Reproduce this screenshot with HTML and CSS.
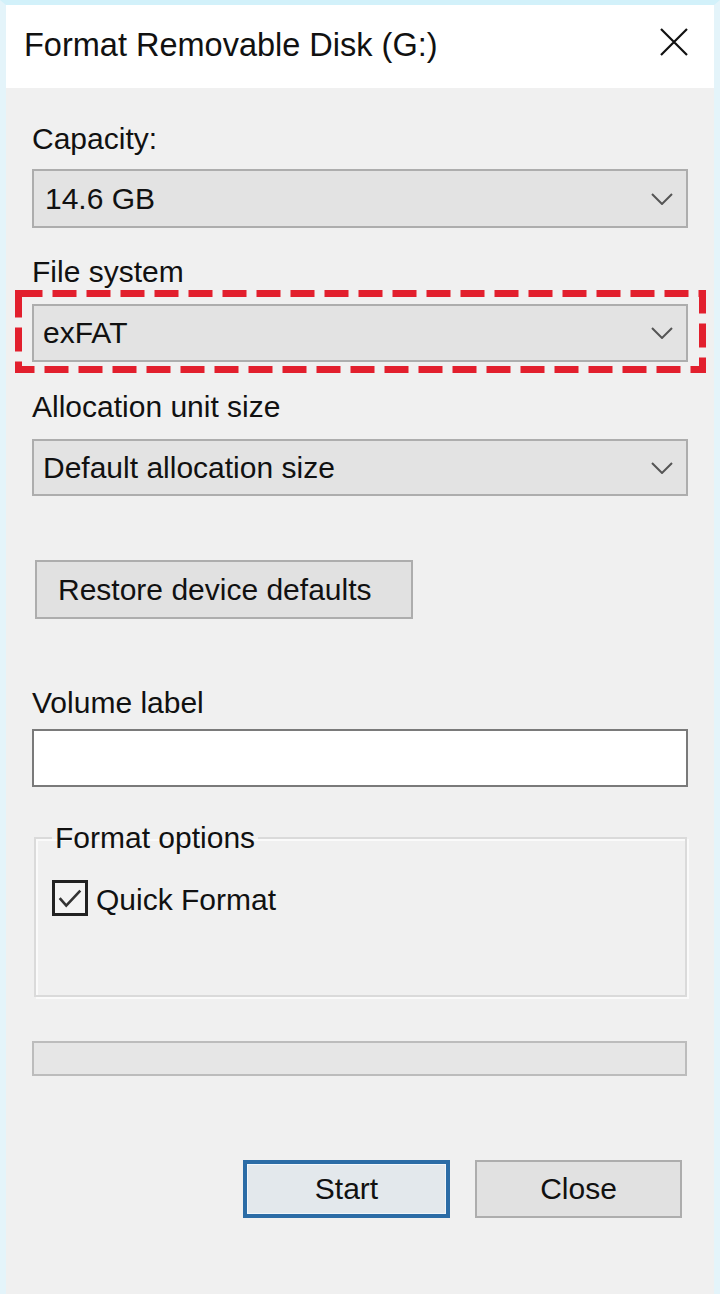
FILE: index.html
```html
<!DOCTYPE html>
<html lang="en">
<head>
<meta charset="utf-8">
<title>Format Removable Disk (G:)</title>
<link rel="stylesheet" href="styles.css">
</head>
<body>
<div class="window">
  <div class="titlebar">
    <span class="title">Format Removable Disk (G:)</span>
    <svg class="close-x" width="28" height="28" viewBox="0 0 28 28" aria-hidden="true">
      <path d="M1 1 L27 27 M27 1 L1 27" stroke="#111" stroke-width="2.2" fill="none"/>
    </svg>
  </div>
  <div class="content">
    <div class="label label-first">Capacity:</div>
    <div class="select select-1">
      <span class="select-text">14.6 GB</span>
      <svg class="chevron" width="22" height="12" viewBox="0 0 22 12" aria-hidden="true"><path d="M1 1 L11 11 L21 1" stroke="#555" stroke-width="2" fill="none"/></svg>
    </div>

    <div class="label label-gap">File system</div>
    <div class="select select-2">
      <span class="select-text">exFAT</span>
      <svg class="chevron" width="22" height="12" viewBox="0 0 22 12" aria-hidden="true"><path d="M1 1 L11 11 L21 1" stroke="#555" stroke-width="2" fill="none"/></svg>
      <svg class="highlight" width="691" height="83" viewBox="0 0 691 83" aria-hidden="true">
        <rect x="3.5" y="3.5" width="684" height="76" fill="none" stroke="#e21f2d" stroke-width="7" stroke-dasharray="24 10"/>
      </svg>
    </div>

    <div class="label label-gap2">Allocation unit size</div>
    <div class="select select-3">
      <span class="select-text">Default allocation size</span>
      <svg class="chevron" width="22" height="12" viewBox="0 0 22 12" aria-hidden="true"><path d="M1 1 L11 11 L21 1" stroke="#555" stroke-width="2" fill="none"/></svg>
    </div>

    <div class="restore-row">
      <div class="button restore">Restore device defaults</div>
    </div>

    <div class="label label-volume">Volume label</div>
    <div class="input"></div>

    <fieldset class="group">
      <legend class="group-legend">Format options</legend>
      <div class="check-row">
        <span class="checkbox">
          <svg width="32" height="31" viewBox="0 0 32 31" aria-hidden="true"><path d="M5 15 L12 23 L27 7" stroke="#333" stroke-width="2.8" fill="none"/></svg>
        </span>
        <span class="check-label">Quick Format</span>
      </div>
    </fieldset>

    <div class="progress"></div>

    <div class="actions">
      <div class="button action start">Start</div>
      <div class="button action">Close</div>
    </div>
  </div>
</div>
</body>
</html>
```

FILE: styles.css
```css
* { box-sizing: border-box; }

html, body {
  margin: 0;
  padding: 0;
  width: 720px;
  height: 1294px;
  overflow: hidden;
  background: #f0f0f0;
}

body {
  font-family: "Liberation Sans", Arial, sans-serif;
  font-size: 30px;
  color: #111;
}

.window {
  width: 720px;
  height: 1294px;
  border-top: 5px solid #d2f1fa;
  border-left: 6px solid #e4f4fa;
  border-right: 6px solid #e4f4fa;
  background: #f0f0f0;
  display: flex;
  flex-direction: column;
}

.titlebar {
  height: 83px;
  background: #ffffff;
  display: flex;
  align-items: center;
  justify-content: space-between;
  padding: 0 26px 0 18px;
  flex: none;
}

.title {
  font-size: 32.5px;
  line-height: 40px;
  margin-bottom: 4px;
}

.close-x {
  margin-bottom: 10px;
}

.content {
  padding: 34px 26px 0 26px;
  display: flex;
  flex-direction: column;
}

.label {
  line-height: 34px;
  height: 34px;
}

.label-gap { margin-top: 27px; }
.label-gap2 { margin-top: 28px; }
.label-volume { margin-top: 67px; }

.select {
  position: relative;
  height: 58px;
  background: #e3e3e3;
  border: 2px solid #adadad;
  display: flex;
  align-items: center;
  justify-content: space-between;
  padding: 0 13px 0 11px;
}

.select-1 { margin-top: 13px; height: 59px; }
.select-2 { margin-top: 15px; padding-left: 9px; }
.select-3 { margin-top: 15px; height: 57px; padding-left: 9px; }

.select-text { line-height: 34px; }

.chevron { flex: none; }

.highlight {
  position: absolute;
  left: -19px;
  top: -16px;
  pointer-events: none;
}

.restore-row {
  margin-top: 64px;
  display: flex;
  padding-left: 3px;
}

.button {
  background: #e1e1e1;
  border: 2px solid #adadad;
  display: flex;
  align-items: center;
  line-height: 34px;
}

.restore {
  width: 378px;
  height: 59px;
  padding-left: 21px;
}

.input {
  margin-top: 9px;
  height: 58px;
  background: #ffffff;
  border: 2px solid #7a7a7a;
}

.group {
  margin: 34px 1px 0 2px;
  padding: 0 16px 79px 16px;
  border: 2px solid #dadada;
  box-shadow: inset 2px 2px 0 #fafafa, 2px 2px 0 #fafafa;
  min-inline-size: 0;
}

.group-legend {
  padding: 0 3px;
  line-height: 34px;
}

.check-row {
  margin-top: 25px;
  display: flex;
  align-items: center;
  height: 36px;
}

.checkbox {
  width: 36px;
  height: 36px;
  border: 3px solid #222;
  background: #f4f4f4;
  display: flex;
  align-items: center;
  justify-content: center;
  flex: none;
}

.check-label {
  margin-left: 8px;
  line-height: 34px;
  padding-top: 4px;
}

.progress {
  margin-top: 44px;
  height: 35px;
  margin-right: 1px;
  background: #e6e6e6;
  border: 2px solid #bcbcbc;
}

.actions {
  margin-top: 84px;
  display: flex;
  justify-content: flex-end;
  gap: 25px;
  margin-right: 6px;
}

.action {
  width: 207px;
  height: 58px;
  justify-content: center;
}

.start {
  border: 4px solid #2b6ca6;
  background: #e3e8ec;
  box-shadow: inset 0 0 0 1px #f0f6fb;
}
```
